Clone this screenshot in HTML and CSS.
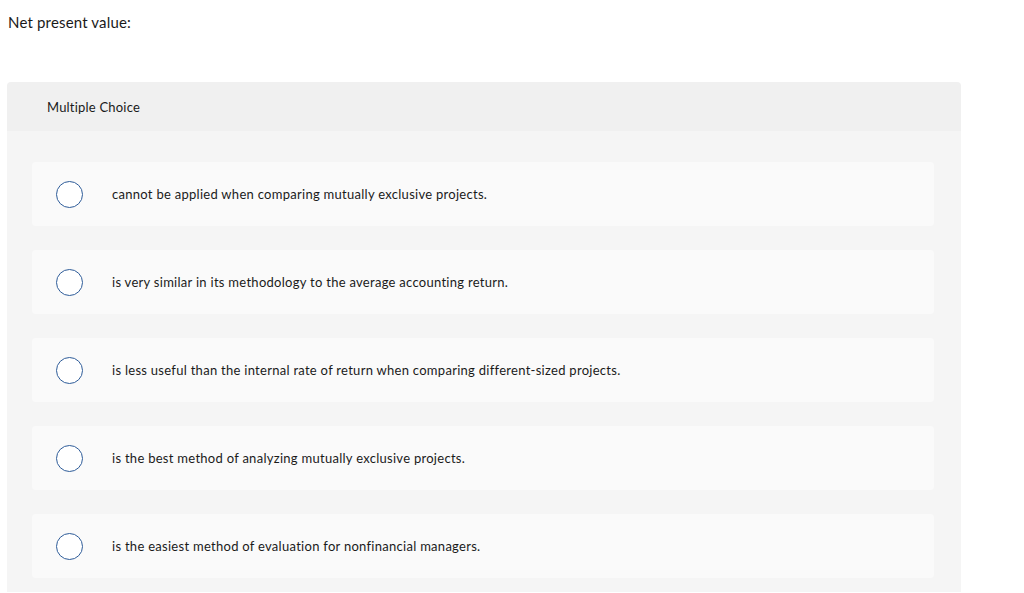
FILE: index.html
```html
<!DOCTYPE html>
<html>
<head>
  <title>Net present value</title>
  <link rel="stylesheet" href="styles.css">
</head>
<body>
  <p class="question-prompt">Net present value:</p>

  <div class="choice-panel">
    <div class="choice-header">Multiple Choice</div>

    <div class="choice-list">
      <label class="choice-option">
        <input type="radio" name="npv" value="a">
        <span class="choice-radio"></span>
        <span class="choice-text">cannot be applied when comparing mutually exclusive projects.</span>
      </label>
      <label class="choice-option">
        <input type="radio" name="npv" value="b">
        <span class="choice-radio"></span>
        <span class="choice-text">is very similar in its methodology to the average accounting return.</span>
      </label>
      <label class="choice-option">
        <input type="radio" name="npv" value="c">
        <span class="choice-radio"></span>
        <span class="choice-text">is less useful than the internal rate of return when comparing different-sized projects.</span>
      </label>
      <label class="choice-option">
        <input type="radio" name="npv" value="d">
        <span class="choice-radio"></span>
        <span class="choice-text">is the best method of analyzing mutually exclusive projects.</span>
      </label>
      <label class="choice-option">
        <input type="radio" name="npv" value="e">
        <span class="choice-radio"></span>
        <span class="choice-text">is the easiest method of evaluation for nonfinancial managers.</span>
      </label>
    </div>
  </div>
</body>
</html>
```

FILE: styles.css
```css
:root {
  --color-text: #1a1a1a;
  --color-header: #f0f0f0;
  --color-body: #f5f5f5;
  --color-card: #fafafa;
  --color-radio: #2e5c99;

  --font-family: Lato, "Open Sans", Arial, sans-serif;
}

body {
  margin: 0;
  font-family: var(--font-family);
  color: var(--color-text);
  background-color: #ffffff;
}

.question-prompt {
  margin: 0;
  padding: 13px 8px 0 8px;
  font-size: 15px;
  line-height: 18px;
  letter-spacing: 0.17px;
}

.choice-panel {
  width: 954px;
  margin: 51px 0 0 7px;
}

.choice-header {
  height: 49px;
  padding-left: 40px;
  display: flex;
  align-items: center;
  font-size: 13px;
  letter-spacing: 0.2px;
  background-color: var(--color-header);
  border-radius: 4px 4px 0 0;
}

.choice-list {
  display: flex;
  flex-direction: column;
  gap: 24px;
  padding: 31px 27px 14px 25px;
  background-color: var(--color-body);
}

.choice-option {
  display: flex;
  align-items: center;
  height: 64px;
  padding-left: 24px;
  background-color: var(--color-card);
  border-radius: 4px;
  cursor: pointer;
}

.choice-option input {
  position: absolute;
  opacity: 0;
  width: 0;
  height: 0;
}

.choice-radio {
  flex: none;
  width: 25px;
  height: 25px;
  border: 1px solid var(--color-radio);
  border-radius: 50%;
  background-color: #ffffff;
  margin-right: 29px;
}

.choice-text {
  font-size: 13px;
  letter-spacing: 0.28px;
}
```
